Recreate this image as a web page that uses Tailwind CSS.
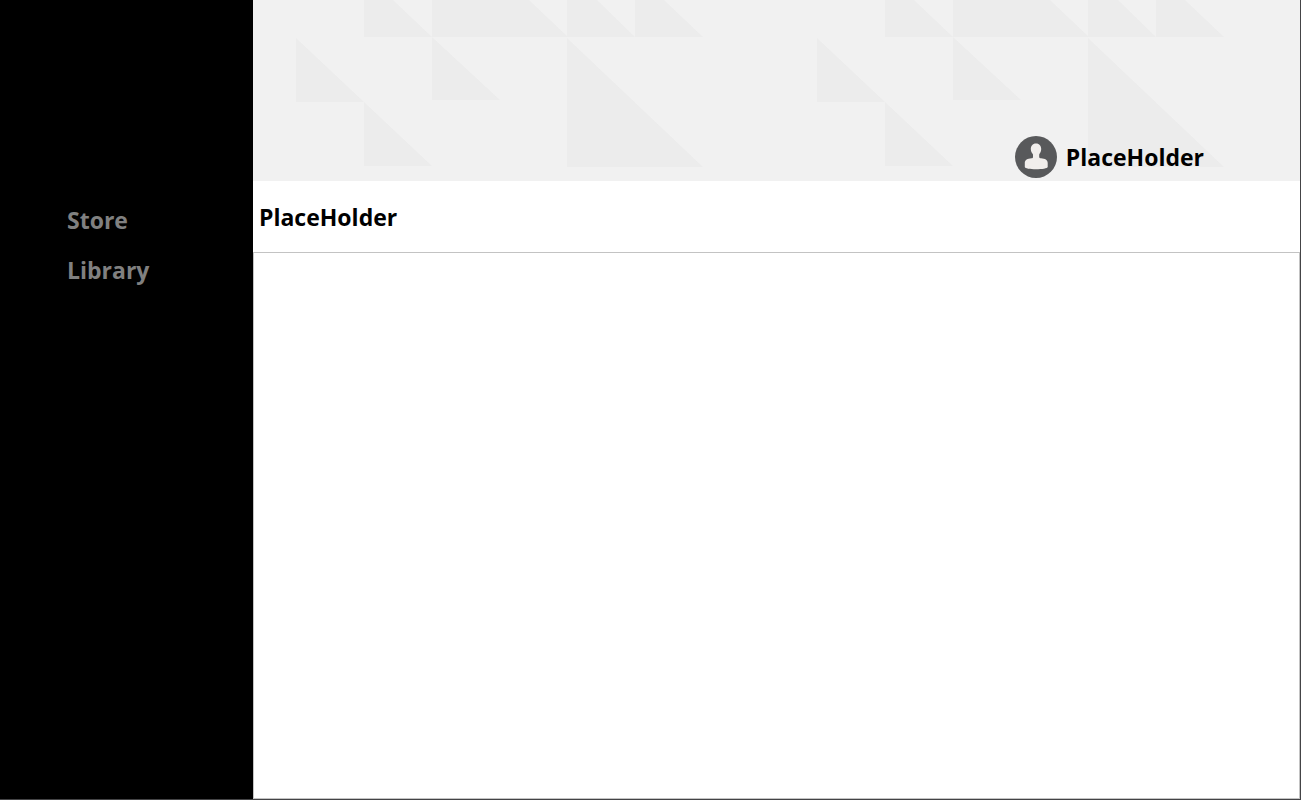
<!DOCTYPE html>
<html lang="en">
<head>
<meta charset="utf-8">
<meta name="viewport" content="width=device-width, initial-scale=1">
<title>Store</title>
<script src="https://cdn.jsdelivr.net/npm/@tailwindcss/browser@4"></script>
</head>
<body class="flex min-h-screen border-r border-b border-[#444446] bg-white font-['Open_Sans','Noto_Sans',sans-serif] text-[23px] leading-8 font-bold text-black">
  <nav class="flex w-[253px] shrink-0 flex-col items-start gap-[18px] bg-black pt-[204px] pl-[67px] text-[#808080]">
    <a href="#store">Store</a>
    <a href="#library">Library</a>
  </nav>
  <main class="flex min-w-0 flex-1 flex-col">
    <header class="relative flex h-[181px] shrink-0 items-end justify-end bg-[#f1f1f1] pr-[96px] pb-[3px]">
      <svg class="absolute inset-0 h-full w-full" aria-hidden="true">
        <defs>
          <pattern id="triangles" width="521" height="181" patternUnits="userSpaceOnUse">
            <path fill="#ececec" d="M43 38V102H111ZM111 0H140L179 37H111ZM179 0H276L315 37H179ZM314 0H344L382 37H314ZM382 0H411L450 37H382ZM179 37V100H247ZM111 102V166H179ZM314 38V167H450Z"/>
          </pattern>
        </defs>
        <rect width="100%" height="100%" fill="url(#triangles)"/>
      </svg>
      <div class="relative flex items-center gap-[9px]">
        <svg class="size-[42px]" viewBox="0 0 42 42" aria-hidden="true">
          <circle cx="21" cy="21" r="21" fill="#58595b"/>
          <path fill="#f1eeec" d="M21 7.500C24.500 7.500 26.200 10 26.200 13C26.200 15.500 25 17 24.200 18.500V21C24.200 22 25 22.300 26 22.300C30 22.500 32.700 24 32.700 27V31C32.500 32.500 27 33.200 21 33.200C15 33.200 10 32.500 9.800 31V27C9.800 24 12.500 22.500 16.500 22.300C17.500 22.300 18 22 18 21V18.500C17 17 15.800 15.500 15.800 13C15.800 10 17.500 7.500 21 7.500Z"/>
        </svg>
        <span>PlaceHolder</span>
      </div>
    </header>
    <h1 class="flex h-[71px] shrink-0 items-center pl-[6px]">PlaceHolder</h1>
    <section class="flex-1 border border-[#c3c3c3]" aria-label="Content"></section>
  </main>
</body>
</html>
